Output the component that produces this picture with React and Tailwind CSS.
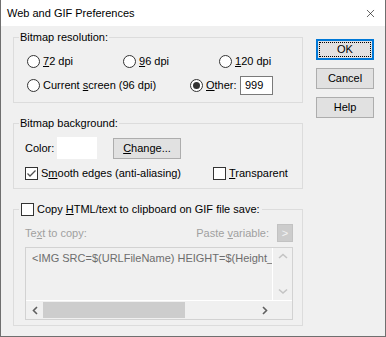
import { X } from "lucide-react";

function Radio({ checked }) {
  return (
    <span className="w-[13px] h-[13px] shrink-0 rounded-full border border-[#333333] bg-white flex items-center justify-center">
      {checked && <span className="w-[7px] h-[7px] rounded-full bg-[#333333]" />}
    </span>
  );
}

function Check({ checked }) {
  return (
    <span className="w-[13px] h-[13px] shrink-0 border border-[#333333] bg-white flex items-center justify-center">
      {checked && (
        <svg width="11" height="11" viewBox="0 0 11 11">
          <polyline points="1.5,5.5 4,8 9.5,2.5" fill="none" stroke="#505050" strokeWidth="1.3" />
        </svg>
      )}
    </span>
  );
}

function Chevron({ dir, color }) {
  const pts = {
    left: "5,1 1.5,4.5 5,8",
    right: "1,1 4.5,4.5 1,8",
    up: "1,5 5,1.5 9,5",
    down: "1,1.5 5,5 9,1.5",
  }[dir];
  const horiz = dir === "left" || dir === "right";
  return (
    <svg width={horiz ? 6 : 10} height={horiz ? 9 : 7} viewBox={horiz ? "0 0 6 9" : "0 0 10 7"}>
      <polyline points={pts} fill="none" stroke={color} strokeWidth="1.6" />
    </svg>
  );
}

function Button({ children, primary, className = "" }) {
  return (
    <button
      className={`h-[21px] flex items-center justify-center bg-[#e1e1e1] ${
        primary
          ? "border-2 border-[#0078d7] outline-1 outline-dotted outline-black outline-offset-[-4px]"
          : "border border-[#adadad]"
      } ${className}`}
    >
      {children}
    </button>
  );
}

export default function App() {
  return (
    <div className="w-[386px] h-[337px] flex flex-col bg-[#f0f0f0] border-x border-b border-[#6f6f6f] text-[11px] text-black font-['Liberation_Sans',Arial,sans-serif] overflow-hidden">
      <div className="h-[26px] shrink-0 bg-white flex items-center justify-between pl-[6px] pr-[8px]">
        <span>Web and GIF Preferences</span>
        <X size={13} strokeWidth={1.2} color="#111" />
      </div>

      <div className="flex pl-[12px]">
        <div className="w-[290px] pt-[4px] flex flex-col">
          <fieldset className="border border-[#dcdcdc]">
            <legend className="ml-[5px] px-[1px] leading-[15px]">Bitmap resolution:</legend>
            <div className="flex items-center h-[18px] mt-[7px] pl-[13px]">
              <label className="w-[96px] flex items-center gap-[3px]">
                <Radio />
                <span>
                  <u>7</u>2 dpi
                </span>
              </label>
              <label className="w-[96px] flex items-center gap-[3px]">
                <Radio />
                <span>
                  <u>9</u>6 dpi
                </span>
              </label>
              <label className="flex items-center gap-[3px]">
                <Radio />
                <span>
                  <u>1</u>20 dpi
                </span>
              </label>
            </div>
            <div className="flex items-center h-[19px] mt-[6px] mb-[7px] pl-[13px]">
              <label className="w-[163px] flex items-center gap-[3px]">
                <Radio />
                <span>
                  Current <u>s</u>creen (96 dpi)
                </span>
              </label>
              <label className="w-[50px] flex items-center gap-[3px]">
                <Radio checked />
                <span>
                  <u>O</u>ther:
                </span>
              </label>
              <div className="w-[33px] h-[19px] bg-white border border-[#7a7a7a] flex items-center pl-[4px]">
                999
              </div>
            </div>
          </fieldset>

          <fieldset className="border border-[#dcdcdc] mt-[13px]">
            <legend className="ml-[5px] px-[1px] leading-[15px]">Bitmap background:</legend>
            <div className="flex items-center h-[22px] mt-[6px] pl-[11px]">
              <span className="w-[32px]">Color:</span>
              <span className="w-[40px] h-[22px] bg-white" />
              <Button className="w-[68px] ml-[16px]">
                <span>
                  <u>C</u>hange...
                </span>
              </Button>
            </div>
            <div className="flex items-center h-[15px] mt-[7px] mb-[7px] pl-[11px]">
              <label className="w-[188px] flex items-center gap-[3px]">
                <Check checked />
                <span>
                  S<u>m</u>ooth edges (anti-aliasing)
                </span>
              </label>
              <label className="flex items-center gap-[3px]">
                <Check />
                <span>
                  <u>T</u>ransparent
                </span>
              </label>
            </div>
          </fieldset>

          <fieldset className="border border-[#dcdcdc] mt-[13px]">
            <legend className="ml-[5px] px-[2px] h-[15px]">
              <span className="flex items-center gap-[3px] h-[15px]">
                <Check />
                <span>
                  Copy <u>H</u>TML/text to clipboard on GIF file save:
                </span>
              </span>
            </legend>
            <div className="pl-[11px] pr-[9px] pb-[5px]">
              <div className="flex items-center justify-between h-[18px] mt-[7px] text-[#a0a0a0]">
                <span>
                  Te<u>x</u>t to copy:
                </span>
                <div className="flex items-center gap-[8px]">
                  <span>
                    Paste <u>v</u>ariable:
                  </span>
                  <span className="w-[16px] h-[18px] bg-[#cccccc] border border-[#c2c2c2] text-[#f4f4f4] flex items-center justify-center">
                    &gt;
                  </span>
                </div>
              </div>
              <div className="mt-[5px] h-[73px] border border-[#d2d2d2] flex flex-col">
                <div className="flex h-[53px] border-b border-white">
                  <div className="w-[247px] border-r border-white overflow-hidden whitespace-nowrap pl-[6px] pt-[3px] leading-[15px] text-[#6d6d6d]">
                    &lt;IMG SRC=$(URLFileName) HEIGHT=$(Height_PX) WIDTH=$(Width_PX)&gt;
                  </div>
                  <div className="flex-1 flex flex-col justify-between">
                    <div className="h-[17px] flex items-center justify-center">
                      <Chevron dir="up" color="#c4c4c4" />
                    </div>
                    <div className="h-[17px] flex items-center justify-center">
                      <Chevron dir="down" color="#c4c4c4" />
                    </div>
                  </div>
                </div>
                <div className="flex flex-1">
                  <div className="w-[248px] flex items-center">
                    <div className="w-[17px] flex items-center justify-center">
                      <Chevron dir="left" color="#606060" />
                    </div>
                    <div className="w-[142px] h-[16px] bg-[#cdcdcd]" />
                    <div className="flex-1 flex items-center justify-end pr-[6px]">
                      <Chevron dir="right" color="#606060" />
                    </div>
                  </div>
                </div>
              </div>
            </div>
          </fieldset>
        </div>

        <div className="ml-[13px] pt-[13px] flex flex-col gap-[8px]">
          <Button primary className="w-[58px]">
            OK
          </Button>
          <Button className="w-[58px]">Cancel</Button>
          <Button className="w-[58px]">Help</Button>
        </div>
      </div>
    </div>
  );
}
